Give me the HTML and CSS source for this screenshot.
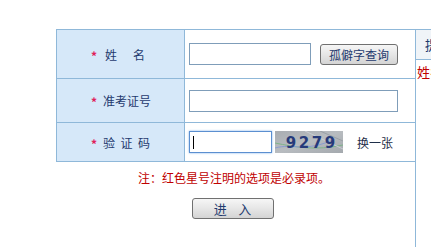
FILE: index.html
```html
<!DOCTYPE html>
<html>
<head>
<meta charset="utf-8">
<link rel="stylesheet" href="styles.css">
</head>
<body>
<div class="page">
  <div class="main">
    <table class="form">
      <tr class="r1">
        <th><span class="star">*</span><span class="lbl wide">姓名</span></th>
        <td><div class="cell"><input class="inp short" type="text"><button class="btn query">孤僻字查询</button></div></td>
      </tr>
      <tr class="r2">
        <th><span class="star">*</span><span class="lbl">准考证号</span></th>
        <td><div class="cell"><input class="inp long" type="text"></div></td>
      </tr>
      <tr class="r3">
        <th><span class="star">*</span><span class="lbl mid">验证码</span></th>
        <td><div class="cell"><div class="inp code"><span class="caret"></span></div>
          <svg class="captcha" width="68" height="22" viewBox="0 0 68 22">
            <defs>
              <linearGradient id="g" x1="0" y1="0" x2="1" y2="1">
                <stop offset="0" stop-color="#a9adb2"/>
                <stop offset="0.5" stop-color="#b8bcc0"/>
                <stop offset="1" stop-color="#a4a9ae"/>
              </linearGradient>
            </defs>
            <rect width="68" height="22" fill="url(#g)"/>
            <path d="M0 12 C20 16 40 20 68 14" stroke="#7fb38a" stroke-width="1" fill="none"/>
            <path d="M0 17 C18 12 30 22 60 8" stroke="#8a9ccf" stroke-width="1" fill="none"/>
            <path d="M30 0 L68 18" stroke="#c9cdd2" stroke-width="1" fill="none"/>
            <path d="M45 0 L68 10" stroke="#9aa0a6" stroke-width="1" fill="none"/>
            <text x="16" y="17" class="digits">9</text>
            <text x="29" y="17" class="digits">2</text>
            <text x="42" y="17" class="digits">7</text>
            <text x="55" y="17" class="digits">9</text>
          </svg>
          <span class="swap">换一张</span></div></td>
      </tr>
    </table>
    <p class="note">注：红色星号注明的选项是必录项。</p>
    <div class="actions"><button class="btn enter">进&nbsp;&nbsp;&nbsp;&nbsp;入</button></div>
  </div>
  <div class="side">
    <div class="side-head">提示</div>
    <div class="side-body">姓名</div>
  </div>
</div>
</body>
</html>
```
FILE: styles.css
```css
html, body {
  margin: 0;
  padding: 0;
  background: #ffffff;
  overflow: hidden;
}
body {
  font-family: "Noto Sans CJK SC", "Liberation Sans", sans-serif;
  font-size: 12px;
  color: #1f3a6e;
}
.page {
  display: flex;
  align-items: flex-start;
  padding: 29px 0 0 56px;
  width: 375px;
}
.main {
  width: 360px;
  flex: none;
}
.form {
  width: 360px;
  border-collapse: collapse;
  border: 1px solid #8fb8d9;
}
.form th, .form td {
  border: 1px solid #8fb8d9;
  padding: 0;
}
.form th {
  width: 128px;
  background: #d6e8f9;
  font-weight: normal;
  text-align: left;
  padding-left: 34px;
  box-sizing: border-box;
  white-space: nowrap;
}
.r1 th, .r1 td { height: 48px; }
.r2 th, .r2 td { height: 43px; }
.r3 th, .r3 td { height: 38px; }
.star {
  color: #e0205a;
  font-weight: bold;
  font-size: 12px;
  margin-right: 6px;
  position: relative;
  top: 1px;
}
.lbl {
  font-size: 12px;
  color: #1f3a6e;
}
.wide { letter-spacing: 16px; margin-left: 2px; }
.mid { letter-spacing: 5.5px; }
.cell {
  display: flex;
  align-items: center;
  padding-left: 4px;
}
.inp {
  box-sizing: border-box;
  height: 22px;
  border: 1px solid #7f9db9;
  background: #fff;
  margin: 0;
  padding: 0 2px;
  font: inherit;
}
.short { width: 122px; }
.long { width: 209px; }
.code {
  width: 83px;
  border: 1px solid #5b8fd0;
  box-shadow: 0 0 2px #7fb2ec;
  display: flex;
  align-items: center;
  padding-left: 3px;
}
.caret {
  width: 1px;
  height: 13px;
  background: #000;
}
.btn {
  box-sizing: border-box;
  height: 21px;
  border: 1px solid #707070;
  border-radius: 3px;
  background: linear-gradient(#f6f6f6, #e6e6e6 50%, #d4d4d4);
  font-family: "Noto Sans CJK SC", sans-serif;
  font-size: 12px;
  color: #1f3a6e;
  padding: 0;
  line-height: 17px;
}
.query {
  width: 78px;
  margin-left: 9px;
}
.captcha {
  display: block;
  margin-left: 3px;
}
.digits {
  font-family: "DejaVu Sans", sans-serif;
  font-weight: bold;
  font-size: 15px;
  fill: #263a7a;
  text-anchor: middle;
}
.swap {
  margin-left: 14px;
  font-size: 12px;
  color: #1f2f4a;
}
.note {
  margin: 7px 0 0;
  text-align: center;
  color: #c00000;
  font-size: 12px;
  padding-right: 4px;
}
.actions {
  display: flex;
  justify-content: center;
  margin-top: 12px;
  padding-right: 7px;
}
.enter {
  width: 82px;
  height: 21px;
  font-size: 13px;
}
.side {
  flex: none;
  width: 16px;
  margin-left: -1px;
  border-left: 1px solid #8fb8d9;
  height: 218px;
  overflow: hidden;
  white-space: nowrap;
}
.side-head {
  height: 31px;
  box-sizing: border-box;
  border-top: 1px solid #8fb8d9;
  border-bottom: 1px solid #8fb8d9;
  background: #f0f4f8;
  padding-left: 9px;
  line-height: 30px;
  font-size: 13px;
  color: #1f3a6e;
}
.side-body {
  padding-left: 1px;
  padding-top: 2px;
  color: #c00000;
  font-size: 13px;
}
```
